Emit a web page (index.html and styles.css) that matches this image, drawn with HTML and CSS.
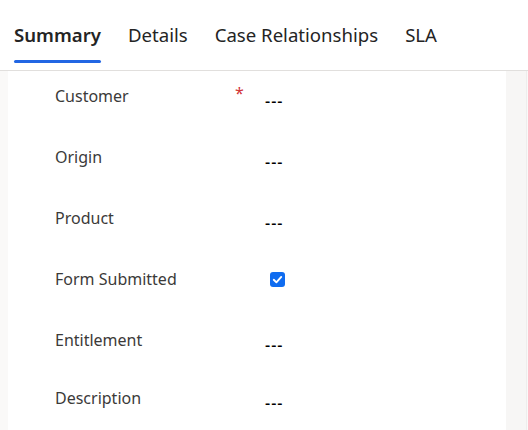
FILE: index.html
```html
<!DOCTYPE html>
<html>
<head>
<meta charset="utf-8">
<link rel="stylesheet" href="styles.css">
</head>
<body>
<div class="header">
  <div class="tabs">
    <div class="tab active">Summary</div>
    <div class="tab">Details</div>
    <div class="tab">Case Relationships</div>
    <div class="tab">SLA</div>
  </div>
</div>
<div class="main">
  <div class="card">
    <div class="row">
      <div class="label">Customer</div>
      <div class="req">*</div>
      <div class="value">---</div>
    </div>
    <div class="row">
      <div class="label">Origin</div>
      <div class="req"></div>
      <div class="value">---</div>
    </div>
    <div class="row">
      <div class="label">Product</div>
      <div class="req"></div>
      <div class="value">---</div>
    </div>
    <div class="row check-row">
      <div class="label">Form Submitted</div>
      <div class="req"></div>
      <div class="value"><span class="checkbox"><svg viewBox="0 0 16 16" width="16" height="16"><path d="M4 8.3 L6.8 11 L12 5.2" fill="none" stroke="#fff" stroke-width="2" stroke-linecap="round" stroke-linejoin="round"/></svg></span></div>
    </div>
    <div class="row short">
      <div class="label">Entitlement</div>
      <div class="req"></div>
      <div class="value">---</div>
    </div>
    <div class="row">
      <div class="label">Description</div>
      <div class="req"></div>
      <div class="value">---</div>
    </div>
  </div>
  <div class="side"></div>
</div>
</body>
</html>
```

FILE: styles.css
```css
html, body {
  margin: 0;
  padding: 0;
  height: 100%;
}
body {
  font-family: "Noto Sans", "Open Sans", sans-serif;
  background: #faf9f8;
  color: #323130;
  overflow: hidden;
}
.header {
  background: #fff;
  height: 70px;
  border-bottom: 1px solid #e1dfdd;
  box-sizing: content-box;
}
.tabs {
  display: flex;
  padding-left: 14px;
  height: 70px;
}
.tab {
  font-size: 18.6px;
  color: #242424;
  margin-right: 27px;
  padding-top: 21px;
  line-height: 28px;
  height: 70px;
  box-sizing: border-box;
  position: relative;
}
.tab.active {
  font-weight: 600;
  color: #242424;
}
.tab.active::after {
  content: "";
  position: absolute;
  left: 0;
  right: 0;
  top: 60px;
  height: 3px;
  border-radius: 2px;
  background: #2266e3;
}
.main {
  display: flex;
  height: 360px;
}
.card {
  margin-left: 8px;
  width: 498px;
  background: #fff;
  padding-top: 13px;
}
.side {
  width: 20px;
  background: #f7f6f5;
  border-right: 1px solid #eeedec;
}
.row {
  display: flex;
  height: 61px;
  padding-left: 47px;
}
.row.short {
  height: 58px;
}
.label {
  width: 180px;
  font-size: 16px;
  line-height: 24px;
  color: #3b3a39;
}
.req {
  width: 30px;
  color: #d13438;
  font-size: 16px;
  line-height: 18px;
}
.value {
  padding-top: 5px;
  font-size: 16px;
  line-height: 24px;
  font-weight: 500;
  letter-spacing: 1px;
  color: #000;
}
.check-row .value {
  padding-top: 5px;
  padding-left: 5px;
  letter-spacing: 0;
}
.checkbox {
  display: block;
  width: 15px;
  height: 15px;
  background: #0f6cf0;
  border-radius: 3px;
}
.checkbox svg {
  display: block;
  width: 15px;
  height: 15px;
}
```
